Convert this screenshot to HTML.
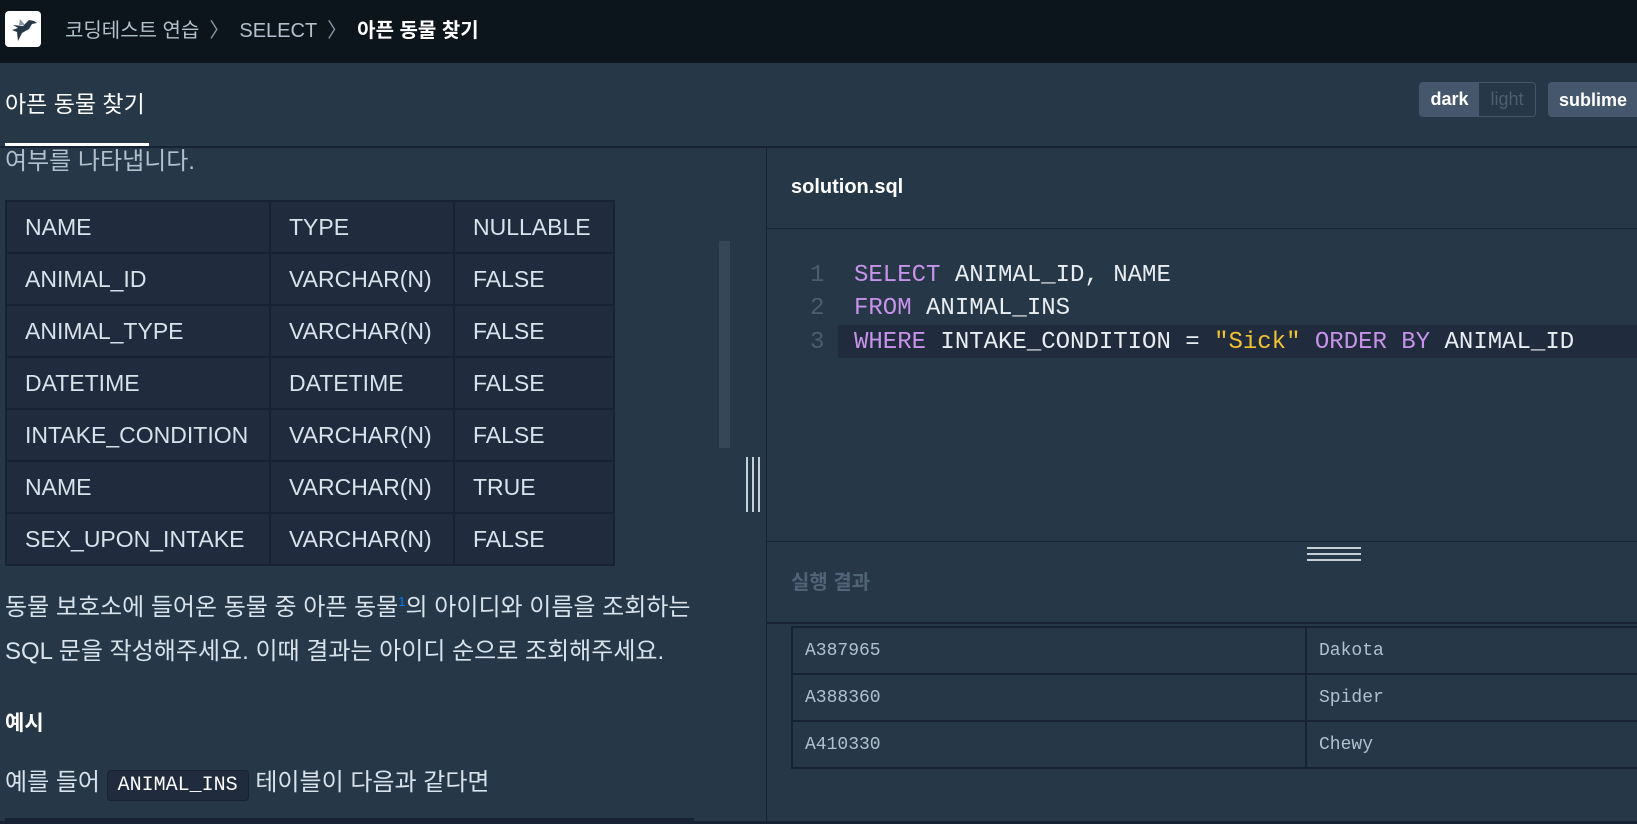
<!DOCTYPE html>
<html><head><meta charset="utf-8"><style>
*{margin:0;padding:0;box-sizing:border-box}
body{width:1637px;height:824px;overflow:hidden;background:#263747;font-family:"Liberation Sans","Noto Sans CJK KR",sans-serif;color:#d7e2eb;position:relative}
.top{position:absolute;left:0;top:0;width:1637px;height:63px;background:#0c151c}
.logo{position:absolute;left:5px;top:11px;width:36px;height:36px;background:#fff;border-radius:4px}
.crumb{position:absolute;left:65px;top:14px;font-size:20px;color:#b2c0cc;white-space:nowrap}
.crumb b{color:#fff}
.crumb .sep{margin:0 10px;color:#8a98a5}
.title{position:absolute;left:5px;top:85px;font-size:23px;color:#fff}
.uline{position:absolute;left:5px;top:143px;width:144px;height:3px;background:#fff}
.hline{position:absolute;background:#172334}
.btns{position:absolute;left:1419px;top:82px;height:35px;width:117px;border:1px solid #44576c;border-radius:4px;overflow:hidden;display:flex;font-size:18px}
.btns span{display:flex;align-items:center;justify-content:center}
.sub{position:absolute;left:1548px;top:82px;width:100px;height:35px;background:#44576c;border-radius:4px;color:#fff;font-size:18px;font-weight:bold;padding:8px 0 0 11px}
table{border-collapse:collapse}
.schema{position:absolute;left:5px;top:200px;background:#202b3d;font-size:23px;color:#d7e2eb}
.schema td{border:2px solid #172334;height:52px;padding:0 18px}
.p{position:absolute;left:5px;font-size:24px;color:#d7e2eb;white-space:nowrap}
code{font-family:"Liberation Mono",monospace;font-size:20px;background:#202b3d;border:1px solid #172334;border-radius:4px;padding:3px 10px;color:#fff}
.code{position:absolute;left:810px;font-family:"Liberation Mono",monospace;font-size:24px;color:#e8edf1;white-space:pre}
.ln{display:inline-block;width:44px;color:#4e5c6b}
.k{color:#c792ea}.s{color:#f1c232}
.res{position:absolute;left:791px;top:626px;font-family:"Liberation Mono",monospace;font-size:18px;color:#b2c0cc;table-layout:fixed;width:1000px}
.res td{border:2px solid #172334;height:47px;padding:0 12px}
</style></head><body>
<div class="top">
<div class="logo"><svg width="36" height="36" viewBox="0 0 36 36"><path d="M8 14 L18 15 L24 9 L29 10 L32 12 L27 13 L24 18 L17 22 L13 30 L12 21 L7 19 L13 17Z" fill="#263747"/><path d="M15 8 L20 14 L14 14Z" fill="#8898a8"/></svg></div>
<div class="crumb">코딩테스트 연습<span class="sep">〉</span>SELECT<span class="sep">〉</span><b>아픈 동물 찾기</b></div>
</div>
<div class="title">아픈 동물 찾기</div>
<div class="btns"><span style="width:59px;background:#44576c;color:#fff;font-weight:bold">dark</span><span style="flex:1;background:#263747;color:#4e5f72">light</span></div>
<div class="sub">sublime</div>
<div class="hline" style="left:0;top:146px;width:1637px;height:2px"></div>
<div class="uline"></div>
<div class="p" style="top:141px;color:#b2c0cc">여부를 나타냅니다.</div>
<table class="schema">
<tr><td style="width:264px">NAME</td><td style="width:184px">TYPE</td><td style="width:160px">NULLABLE</td></tr>
<tr><td>ANIMAL_ID</td><td>VARCHAR(N)</td><td>FALSE</td></tr>
<tr><td>ANIMAL_TYPE</td><td>VARCHAR(N)</td><td>FALSE</td></tr>
<tr><td>DATETIME</td><td>DATETIME</td><td>FALSE</td></tr>
<tr><td>INTAKE_CONDITION</td><td>VARCHAR(N)</td><td>FALSE</td></tr>
<tr><td>NAME</td><td>VARCHAR(N)</td><td>TRUE</td></tr>
<tr><td>SEX_UPON_INTAKE</td><td>VARCHAR(N)</td><td>FALSE</td></tr>
</table>
<div style="position:absolute;left:719px;top:241px;width:11px;height:207px;background:#37475a"></div>
<div style="position:absolute;left:746px;top:457px;width:14px;height:55px;border-left:2px solid #c5cfd6;border-right:2px solid #c5cfd6"><div style="margin:0 auto;width:2px;height:100%;background:#c5cfd6"></div></div>
<div class="p" style="top:587px">동물 보호소에 들어온 동물 중 아픈 동물<sup style="color:#0078ff;font-size:13px">1</sup>의 아이디와 이름을 조회하는</div>
<div class="p" style="top:631px">SQL 문을 작성해주세요. 이때 결과는 아이디 순으로 조회해주세요.</div>
<div class="p" style="top:707px;font-weight:bold;color:#fff;font-size:21px">예시</div>
<div class="p" style="top:762px">예를 들어 <code>ANIMAL_INS</code> 테이블이 다음과 같다면</div>
<div class="hline" style="left:5px;top:818px;width:689px;height:4px"></div>
<div class="hline" style="left:766px;top:148px;width:1px;height:676px"></div>
<div style="position:absolute;left:791px;top:176px;font-size:20px;font-weight:bold;color:#fff">solution.sql</div>
<div class="hline" style="left:767px;top:228px;width:870px;height:1px"></div>
<div style="position:absolute;left:838px;top:325px;width:799px;height:33px;background:#202b3d"></div>
<div class="code" style="top:262px"><span class="ln">1</span><span class="k">SELECT</span> ANIMAL_ID, NAME</div>
<div class="code" style="top:295px"><span class="ln">2</span><span class="k">FROM</span> ANIMAL_INS</div>
<div class="code" style="top:329px"><span class="ln">3</span><span class="k">WHERE</span> INTAKE_CONDITION = <span class="s">"Sick"</span> <span class="k">ORDER BY</span> ANIMAL_ID</div>
<div class="hline" style="left:767px;top:541px;width:870px;height:1px"></div>
<div style="position:absolute;left:1307px;top:547px;width:54px;height:14px;border-top:2px solid #c5cfd6;border-bottom:2px solid #c5cfd6"><div style="margin-top:4px;height:2px;background:#c5cfd6"></div></div>
<div style="position:absolute;left:791px;top:566px;font-size:20px;font-weight:bold;color:#4f6477">실행 결과</div>
<div class="hline" style="left:767px;top:622px;width:870px;height:2px"></div>
<table class="res">
<tr><td style="width:514px">A387965</td><td style="width:486px">Dakota</td></tr>
<tr><td>A388360</td><td>Spider</td></tr>
<tr><td>A410330</td><td>Chewy</td></tr>
</table>
<div class="hline" style="left:0;top:821px;width:1637px;height:3px"></div>
</body></html>
